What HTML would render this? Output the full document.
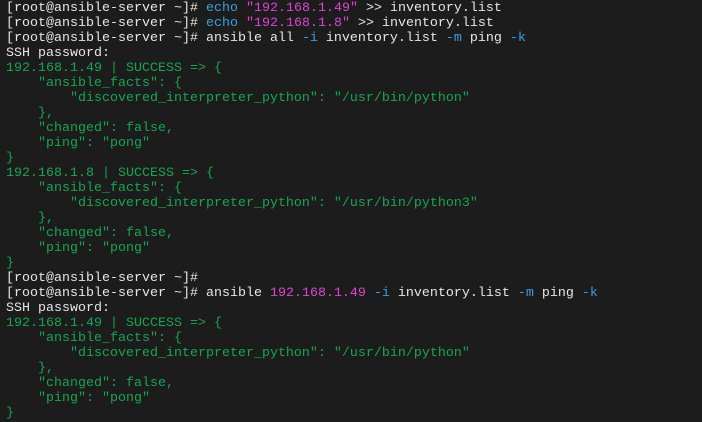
<!DOCTYPE html><html><head><style>
body{margin:0;background:#1c1c1c;width:702px;height:422px;overflow:hidden}
pre{margin:0;padding:1px 0 0 6px;font-family:"Liberation Mono",monospace;font-size:13.33px;line-height:15px;color:#e6e6e6}
.b{color:#3b9ee0}.m{color:#e042d8}.g{color:#16a751}
</style></head><body><pre>[root@ansible-server ~]# <span class="b">echo</span> <span class="m">"192.168.1.49"</span> &gt;&gt; inventory.list
[root@ansible-server ~]# <span class="b">echo</span> <span class="m">"192.168.1.8"</span> &gt;&gt; inventory.list
[root@ansible-server ~]# ansible all <span class="b">-i</span> inventory.list <span class="b">-m</span> ping <span class="b">-k</span>
SSH password:
<span class="g">192.168.1.49 | SUCCESS =&gt; {
    "ansible_facts": {
        "discovered_interpreter_python": "/usr/bin/python"
    },
    "changed": false,
    "ping": "pong"
}
192.168.1.8 | SUCCESS =&gt; {
    "ansible_facts": {
        "discovered_interpreter_python": "/usr/bin/python3"
    },
    "changed": false,
    "ping": "pong"
}</span>
[root@ansible-server ~]#
[root@ansible-server ~]# ansible <span class="m">192.168.1.49</span> <span class="b">-i</span> inventory.list <span class="b">-m</span> ping <span class="b">-k</span>
SSH password:
<span class="g">192.168.1.49 | SUCCESS =&gt; {
    "ansible_facts": {
        "discovered_interpreter_python": "/usr/bin/python"
    },
    "changed": false,
    "ping": "pong"
}</span></pre></body></html>
